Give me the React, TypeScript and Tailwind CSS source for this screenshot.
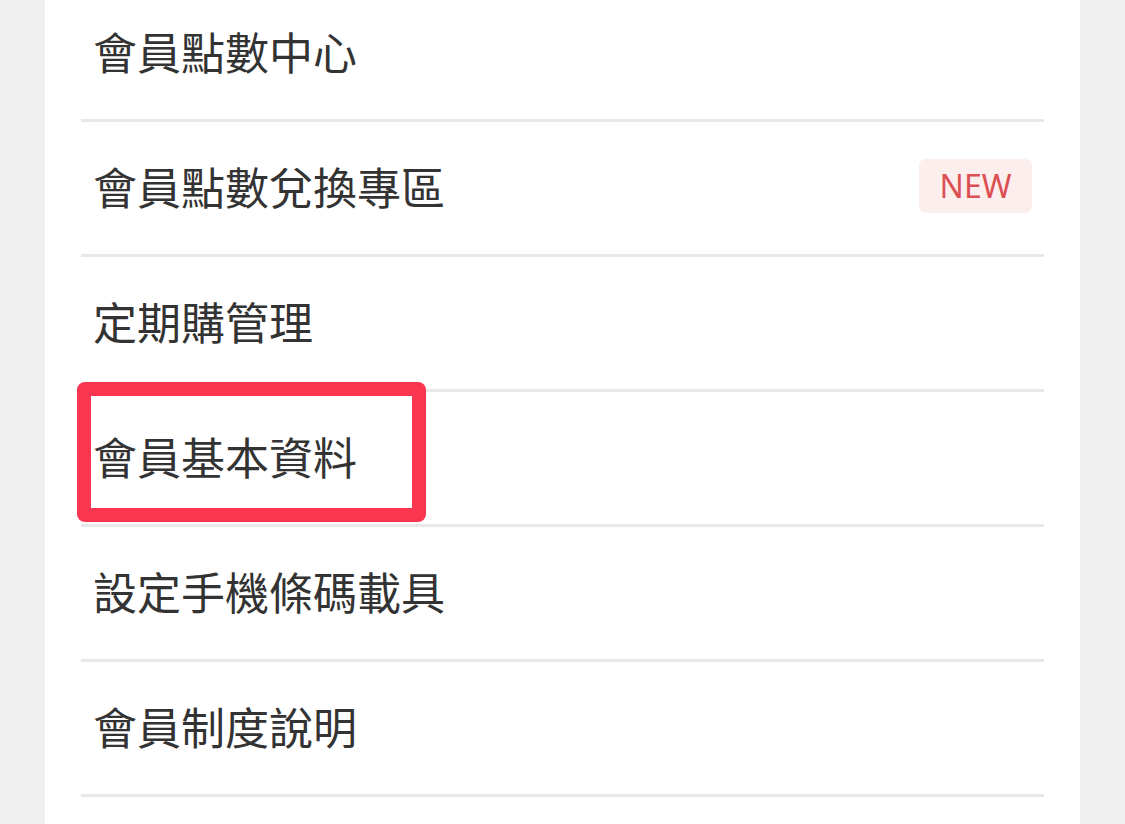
const ITEMS: { label: string; badge?: string; highlight?: boolean }[] = [
  { label: '會員點數中心' },
  { label: '會員點數兌換專區', badge: 'NEW' },
  { label: '定期購管理' },
  { label: '會員基本資料', highlight: true },
  { label: '設定手機條碼載具' },
  { label: '會員制度說明' },
]

export default function App() {
  return (
    <div className="h-[824px] overflow-hidden bg-[#efefef] font-['Noto_Sans_CJK_TC','Noto_Sans',sans-serif]">
      <div className="ml-[45px] flex h-full w-[1035px] flex-col bg-white px-[36px]">
        <div className="-mt-[13px]">
          {ITEMS.map((item) => (
            <div
              key={item.label}
              className="relative flex h-[135px] items-center border-b-[3px] border-[#e8e8e8] pb-1 pl-3 pr-3"
            >
              <span className="text-[44px] font-normal leading-none text-[#333333]">{item.label}</span>
              {item.badge && (
                <span className="ml-auto flex h-[54px] w-[113px] items-center justify-center rounded-[7px] bg-[#fdeeee] font-['Noto_Sans',sans-serif] text-[32px] leading-none text-[#dc4f52]">
                  {item.badge}
                </span>
              )}
              {item.highlight && (
                <div className="pointer-events-none absolute -left-[4px] -top-[10px] h-[140px] w-[349px] rounded-[8px] border-[14px] border-[#f9354f]" />
              )}
            </div>
          ))}
        </div>
      </div>
    </div>
  )
}
